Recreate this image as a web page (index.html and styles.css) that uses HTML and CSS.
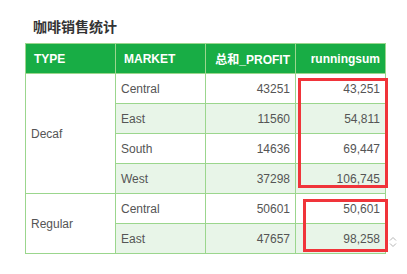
FILE: index.html
```html
<!DOCTYPE html>
<html>
<head>
<meta charset="utf-8">
<link rel="stylesheet" href="styles.css">
</head>
<body>
<div class="panel">
  <div class="title">咖啡销售统计</div>
  <div class="wrap">
    <table class="grid">
      <thead>
        <tr><th>TYPE</th><th>MARKET</th><th class="r">总和_PROFIT</th><th class="r">runningsum</th></tr>
      </thead>
      <tbody>
        <tr><td rowspan="4" class="type">Decaf</td><td>Central</td><td class="r">43251</td><td class="r">43,251</td></tr>
        <tr class="alt"><td>East</td><td class="r">11560</td><td class="r">54,811</td></tr>
        <tr><td>South</td><td class="r">14636</td><td class="r">69,447</td></tr>
        <tr class="alt"><td>West</td><td class="r">37298</td><td class="r">106,745</td></tr>
        <tr><td rowspan="2" class="type">Regular</td><td>Central</td><td class="r">50601</td><td class="r">50,601</td></tr>
        <tr class="alt"><td>East</td><td class="r">47657</td><td class="r">98,258</td></tr>
      </tbody>
    </table>
    <div class="mark mark1"></div>
    <div class="mark mark2"></div>
    <svg class="spin" width="8" height="12" viewBox="0 0 8 12"><path d="M1 4.5 L4 1.5 L7 4.5 M1 7.5 L4 10.5 L7 7.5" fill="none" stroke="#b5b5b5" stroke-width="1"/></svg>
  </div>
</div>
</body>
</html>
```
FILE: styles.css
```css
html, body { margin: 0; padding: 0; background: #fff; }
body { font-family: "Liberation Sans", Arial, "Noto Sans CJK SC", sans-serif; }
.panel { padding: 19px 0 0 25px; }
.title { font-size: 14px; font-weight: bold; color: #333; line-height: 17px; padding-left: 8px; height: 24px; }
.wrap { position: relative; width: 380px; }
.grid { border-collapse: collapse; table-layout: fixed; width: 361px; font-size: 12px; color: #555; }
.grid th, .grid td { border: 1px solid #9bd68d; height: 29px; padding: 0 5px; text-align: left; vertical-align: middle; white-space: nowrap; overflow: hidden; }
.grid th { background: #18ad45; color: #fff; font-weight: bold; padding-left: 8px; }
.grid th.r { padding-right: 5px; }
.grid .r { text-align: right; }
.grid tr.alt td { background: #e8f5e8; }
.grid td.type { background: #fff; }
.mark { position: absolute; border: 3px solid #f0343a; box-sizing: border-box; }
.mark1 { left: 273px; top: 35px; width: 90px; height: 110px; }
.mark2 { left: 278px; top: 156px; width: 85px; height: 53px; }
.spin { position: absolute; left: 364px; top: 193px; }
```
